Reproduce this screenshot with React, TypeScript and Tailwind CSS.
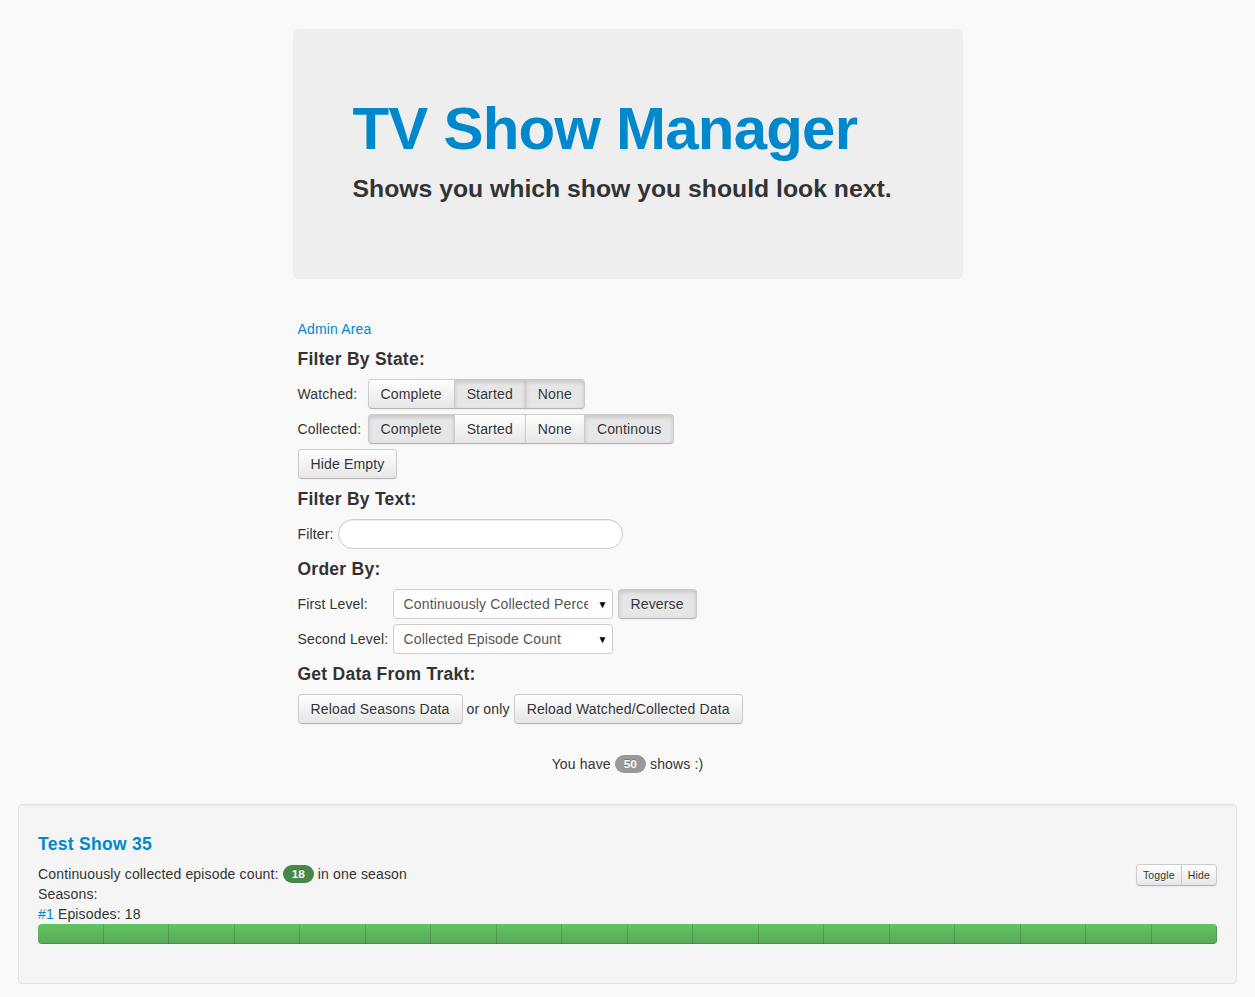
import React from "react";

type BtnProps = {
  label: string;
  active?: boolean;
  pos?: "first" | "mid" | "last" | "single";
  size?: "normal" | "mini";
};

function Btn({ label, active = false, pos = "single", size = "normal" }: BtnProps) {
  const radius =
    pos === "single"
      ? "rounded-[4px]"
      : pos === "first"
      ? "rounded-l-[4px]"
      : pos === "last"
      ? "rounded-r-[4px] -ml-px"
      : "-ml-px";
  const sizing =
    size === "mini"
      ? "px-[6px] text-[10.5px] leading-[20px]"
      : "px-[12px] py-[4px] text-[14px] leading-[20px]";
  const look = active
    ? "bg-[#e6e6e6] shadow-[inset_0_2px_4px_rgba(0,0,0,0.15),0_1px_2px_rgba(0,0,0,0.05)]"
    : "bg-linear-to-b from-white to-[#e6e6e6] shadow-[inset_0_1px_0_rgba(255,255,255,0.2),0_1px_2px_rgba(0,0,0,0.05)]";
  return (
    <button
      type="button"
      className={`${sizing} ${radius} ${look} relative border border-[#cccccc] border-b-[#b3b3b3] text-[#333333] [text-shadow:0_1px_1px_rgba(255,255,255,0.75)] whitespace-nowrap`}
    >
      {label}
    </button>
  );
}

function Group({ items }: { items: { label: string; active: boolean }[] }) {
  return (
    <div className="flex">
      {items.map((it, i) => (
        <Btn
          key={it.label}
          label={it.label}
          active={it.active}
          pos={i === 0 ? "first" : i === items.length - 1 ? "last" : "mid"}
        />
      ))}
    </div>
  );
}

function Heading({ children }: { children: React.ReactNode }) {
  return (
    <h4 className="text-[17.5px] leading-[20px] font-bold tracking-[0.25px] text-[#333333]">{children}</h4>
  );
}

function Select({ value }: { value: string }) {
  return (
    <div className="relative w-[220px]">
      <select
        defaultValue={value}
        className="appearance-none w-[220px] h-[30px] pl-[10px] pr-[24px] border border-[#cccccc] rounded-[4px] bg-white text-[14px] tracking-[0.15px] text-[#555555] outline-none"
      >
        <option>{value}</option>
      </select>
      <span className="pointer-events-none absolute right-[5px] top-[6px] text-[10px] text-black">▼</span>
    </div>
  );
}

export default function App() {
  const segments = Array.from({ length: 18 }, (_, i) => i);

  return (
    <div className="min-h-screen bg-[#f9f9f9] text-[#333333] text-[14px] leading-[20px] tracking-[0.15px] font-['Liberation_Sans',Arial,sans-serif] pt-[29px] pb-[13px]">
      <div className="w-[670px] mx-auto rounded-[6px] bg-[#eeeeee] px-[60px] pt-[60px] pb-[75px]">
        <h1 className="mt-[10px] text-[60px] leading-[60px] font-bold text-[#0088cc] tracking-[-0.8px]">
          TV Show Manager
        </h1>
        <p className="mt-[15px] text-[24.75px] leading-[30px] font-bold tracking-normal text-[#333333]">
          Shows you which show you should look next.
        </p>
      </div>

      <div className="w-[660px] mx-auto mt-[40px]">
        <a href="#" className="text-[#0088cc]">
          Admin Area
        </a>

        <div className="mt-[10px]">
          <Heading>Filter By State:</Heading>
        </div>
        <div className="mt-[10px] flex items-center">
          <span className="w-[70px]">Watched:</span>
          <Group
            items={[
              { label: "Complete", active: false },
              { label: "Started", active: true },
              { label: "None", active: true },
            ]}
          />
        </div>
        <div className="mt-[5px] flex items-center">
          <span className="w-[70px]">Collected:</span>
          <Group
            items={[
              { label: "Complete", active: true },
              { label: "Started", active: false },
              { label: "None", active: false },
              { label: "Continous", active: true },
            ]}
          />
        </div>
        <div className="mt-[5px] flex">
          <Btn label="Hide Empty" />
        </div>

        <div className="mt-[10px]">
          <Heading>Filter By Text:</Heading>
        </div>
        <div className="mt-[10px] flex items-center gap-[4px]">
          <span>Filter:</span>
          <input
            type="text"
            className="w-[285px] h-[30px] px-[14px] rounded-[15px] border border-[#cccccc] bg-white shadow-[inset_0_1px_1px_rgba(0,0,0,0.075)] outline-none"
          />
        </div>

        <div className="mt-[10px]">
          <Heading>Order By:</Heading>
        </div>
        <div className="mt-[10px] flex items-center">
          <span className="w-[95px]">First Level:</span>
          <Select value="Continuously Collected Percentage" />
          <div className="ml-[5px] flex">
            <Btn label="Reverse" active />
          </div>
        </div>
        <div className="mt-[5px] flex items-center">
          <span className="w-[95px]">Second Level:</span>
          <Select value="Collected Episode Count" />
        </div>

        <div className="mt-[10px]">
          <Heading>Get Data From Trakt:</Heading>
        </div>
        <div className="mt-[10px] flex items-center">
          <Btn label="Reload Seasons Data" />
          <span className="mx-[4px]">or only</span>
          <Btn label="Reload Watched/Collected Data" />
        </div>
      </div>

      <p className="mt-[30px] text-center">
        You have{" "}
        <span className="inline-block align-[1px] rounded-[9px] bg-[#999999] px-[9px] py-[2px] text-[11.844px] leading-[14px] font-bold tracking-normal text-white [text-shadow:0_-1px_0_rgba(0,0,0,0.25)]">
          50
        </span>{" "}
        shows :)
      </p>

      <div className="mx-[18px] mt-[30px] rounded-[4px] border border-[#e3e3e3] bg-[#f5f5f5] p-[19px] shadow-[inset_0_1px_1px_rgba(0,0,0,0.05)]">
        <h4 className="mt-[10px] text-[17.5px] leading-[20px] font-bold tracking-[0.3px] text-[#0088cc]">
          Test Show 35
        </h4>
        <div className="mt-[10px] flex h-[20px] items-start justify-between">
          <div>
            Continuously collected episode count:{" "}
            <span className="inline-block align-[1px] rounded-[9px] bg-[#468847] px-[9px] py-[2px] text-[11.844px] leading-[14px] font-bold tracking-normal text-white [text-shadow:0_-1px_0_rgba(0,0,0,0.25)]">
              18
            </span>{" "}
            in one season
          </div>
          <div className="flex">
            <Btn label="Toggle" pos="first" size="mini" />
            <Btn label="Hide" pos="last" size="mini" />
          </div>
        </div>
        <div>Seasons:</div>
        <div>
          <a href="#" className="text-[#0088cc]">
            #1
          </a>{" "}
          Episodes: 18
        </div>
        <div className="mb-[20px] flex h-[20px] overflow-hidden rounded-[4px] bg-[#f7f7f7]">
          {segments.map((s) => (
            <div
              key={s}
              className="flex-1 bg-linear-to-b from-[#62c462] to-[#57a957] shadow-[inset_-1px_0_0_rgba(0,0,0,0.15),inset_0_-1px_0_rgba(0,0,0,0.15)]"
            />
          ))}
        </div>
      </div>
    </div>
  );
}
